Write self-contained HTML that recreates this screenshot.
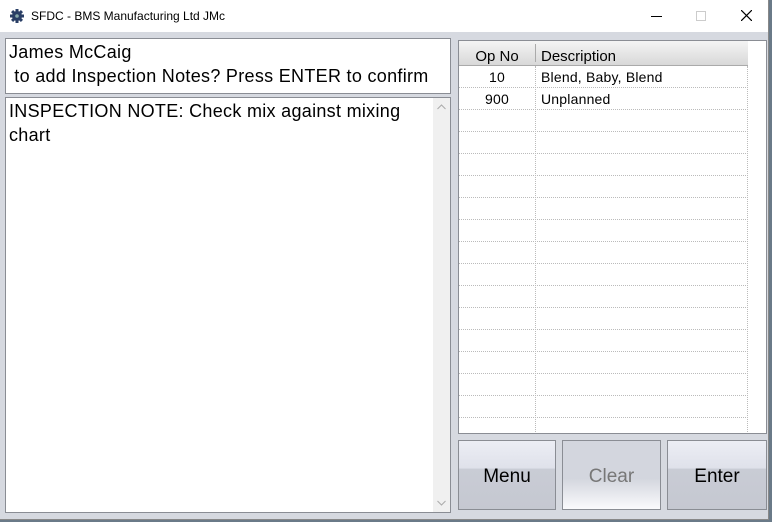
<!DOCTYPE html>
<html><head><style>
*{box-sizing:border-box;margin:0;padding:0}
body{width:772px;height:522px;overflow:hidden;background:#6a7a88;font-family:"Liberation Sans",Arial,sans-serif;position:relative}
.win{position:absolute;left:0;top:0;width:769px;height:520px;background:#d6d9e0;border-right:1px solid #888;border-bottom:1px solid #888}
.title{position:absolute;left:0;top:0;width:768px;height:32px;background:#fff;font-size:12px;color:#000}
.title .t{position:absolute;left:31px;top:9px}
.box{position:absolute;background:#fff;border:1px solid #8a8d94}
.lbl{font-size:18px;color:#000;line-height:24px;letter-spacing:0.3px}
.grid{position:absolute;left:458px;top:40px;width:309px;height:394px;background:#fff;border:1px solid #8a8d94;overflow:hidden}
.hdr{position:absolute;left:0;top:0;width:289px;height:25px;background:linear-gradient(#f4f4f4,#d8d8d8);border-bottom:1px solid #aaa;font-size:15px}
.row{position:absolute;left:0;width:289px;height:22px;border-bottom:1px dotted #bbb;font-size:14px;letter-spacing:0.2px}
.c1{position:absolute;left:0;width:76px;text-align:center;top:3px}
.c2{position:absolute;left:82px;top:3px}
.vl{position:absolute;left:76px;top:25px;width:0;height:370px;border-left:1px dotted #bbb}
.vl2{position:absolute;left:288px;top:25px;width:0;height:370px;border-left:1px dotted #bbb}
.btn{position:absolute;top:440px;height:70px;border:1px solid #8a8d94;background:linear-gradient(#eceef5 0%,#dfe1ea 40%,#c9ccd5 41%,#c5c8d1 100%);font-size:19px;text-align:center;line-height:72px}
</style></head><body>
<div class="win">
<div class="title">
<svg style="position:absolute;left:9px;top:8px" width="16" height="16" viewBox="0 0 16 16"><g fill="#2a3f66"><circle cx="8" cy="8" r="5"/><rect x="6.5" y="1" width="3" height="14"/><rect x="1" y="6.5" width="14" height="3"/><rect x="6.5" y="1" width="3" height="14" transform="rotate(45 8 8)"/><rect x="6.5" y="1" width="3" height="14" transform="rotate(-45 8 8)"/></g><circle cx="8" cy="8" r="1.8" fill="#8aa"/></svg>
<span class="t">SFDC - BMS Manufacturing Ltd JMc</span>
<div style="position:absolute;left:651px;top:16px;width:11px;height:1px;background:#000"></div>
<div style="position:absolute;left:696px;top:11px;width:10px;height:10px;border:1px solid #ccc"></div>
<svg style="position:absolute;left:741px;top:10px" width="11" height="11"><path d="M0 0L11 11M11 0L0 11" stroke="#000" stroke-width="1.2"/></svg>
</div>
<div class="box" style="left:5px;top:38px;width:446px;height:56px;padding:1px 0 0 3px">
<div class="lbl">James McCaig</div><div class="lbl">&nbsp;to add Inspection Notes? Press ENTER to confirm</div>
</div>
<div class="box" style="left:5px;top:97px;width:446px;height:416px;padding:1px 0 0 3px">
<div class="lbl" style="width:420px">INSPECTION NOTE: Check mix against mixing chart</div>
<div style="position:absolute;right:0;top:0;width:17px;height:414px;background:#f0f0f0">
<svg style="position:absolute;left:4px;top:6px" width="9" height="6"><path d="M0.5 5L4.5 1L8.5 5" stroke="#aaa" fill="none"/></svg>
<svg style="position:absolute;left:4px;bottom:6px" width="9" height="6"><path d="M0.5 1L4.5 5L8.5 1" stroke="#aaa" fill="none"/></svg></div>
</div>
<div class="grid">
<div class="hdr"><span class="c1" style="top:7px">Op No</span><span style="position:absolute;left:76px;top:3px;height:18px;border-left:1px solid #aaa"></span><span class="c2" style="top:7px">Description</span></div>
<div class="vl"></div><div class="vl2"></div>
<div class="row" style="top:25px"><span class="c1">10</span><span class="c2">Blend, Baby, Blend</span></div>
<div class="row" style="top:47px"><span class="c1">900</span><span class="c2">Unplanned</span></div>
<div class="row" style="top:69px"></div><div class="row" style="top:91px"></div><div class="row" style="top:113px"></div><div class="row" style="top:135px"></div><div class="row" style="top:157px"></div><div class="row" style="top:179px"></div><div class="row" style="top:201px"></div><div class="row" style="top:223px"></div><div class="row" style="top:245px"></div><div class="row" style="top:267px"></div><div class="row" style="top:289px"></div><div class="row" style="top:311px"></div><div class="row" style="top:333px"></div><div class="row" style="top:355px"></div>
</div>
<div class="btn" style="left:458px;width:98px">Menu</div>
<div class="btn" style="left:562px;width:99px;color:#777;background:linear-gradient(#d3d6de,#d3d6de 55%,#fafafc)">Clear</div>
<div class="btn" style="left:667px;width:100px">Enter</div>
</div>
</body></html>
